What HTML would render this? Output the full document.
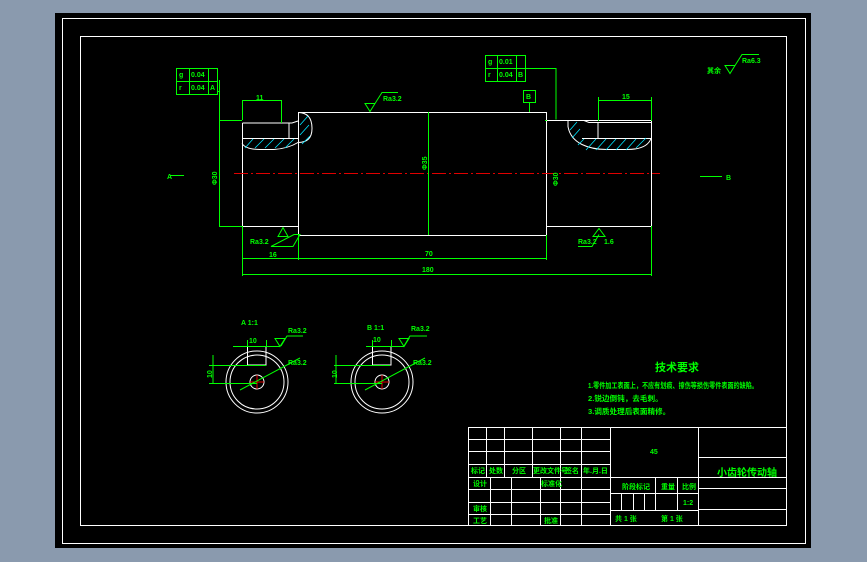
<!DOCTYPE html>
<html><head><meta charset="utf-8"><style>
html,body{margin:0;padding:0;background:#8a9aae;width:867px;height:562px;overflow:hidden}
svg{display:block}
text{font-family:"Liberation Sans","Noto Sans CJK SC",sans-serif;fill:#00ff00;font-weight:bold}
</style></head><body>
<svg width="867" height="562" viewBox="0 0 867 562">
<rect x="55" y="13" width="756" height="535" fill="#000"/>
<rect x="62.5" y="18.5" width="743" height="525" fill="none" stroke="#fff"/>
<rect x="80.5" y="36.5" width="706" height="489" fill="none" stroke="#fff"/>
<g fill="none" stroke-width="1">
<g stroke="#fff">
<path d="M242.5 123V226.5H298.5M298.5 112.5H546.5V235.5H298.5Z"/>
<path d="M546.5 120.5H651.5V226.5H546.5"/>
<path d="M242.5 123H292l6-2M242.5 138.5H298M289 123V138"/>
<path d="M298 112.5q14 0 14 16q0 14-14 14q-10 6-24 7h-14q-14 0-18-6"/>
<path d="M568 120.5v6q2 12 14 18q10 5 25 5h20q20 0 24-11M568 120.5h16l5 2h62M582 138.5h69M598 122v16"/>
</g>
<g stroke="#00e5ff" stroke-width="0.8">
<path d="M245 148l8-9M255 148l9-9M265 148l9-9M275 148l9-9M285 148l9-9M300 135l9-10M300 125l8-9M302 144l8-8"/>
<path d="M586 150l10-11M596 150l10-11M606 150l10-11M616 150l10-11M626 150l10-11M636 148l10-10M570 130l7-8M572 138l8-9M578 145l6-6"/>
</g>
<path d="M234 173.5H660" stroke="#e00000" stroke-dasharray="14 3 2 3"/>
<g stroke="#00ff00">
<path d="M219.5 80V226.5H242M219 120.5H242M428.5 112V235M547 120.5h-2"/>
<path d="M242.5 226V276M298.5 235V260M546.5 235V260M651.5 226V276M242 258.5H546M242 274.5H651"/>
<path d="M242.5 100v20M281.5 100v23M242 100.5h39M598.5 97v24M651.5 97v24M598 100.5h53"/>
<path d="M176.5 68.5h41v26h-41zM176 81.5h41M189.5 68v26M208.5 68v26M217 91.5h3"/>
<path d="M485.5 55.5h40v26h-40zM485 68.5h40M497.5 55v26M516.5 55v26M525 68.5h31v51"/>
<path d="M523.5 90.5h12v12h-12zM529.5 103v9"/>
<path d="M365 103.5h10l-5 8zM375 103.5l7-11h16"/>
<path d="M271 246.5h22l7-12h-6zM278 236.5l5-9l5 9z"/>
<path d="M578 246.5h14l7-12M605 236.5h-12l6-8z"/>
<path d="M725 65.5h10l-5 8zM735 65.5l7-11h17"/>
<path d="M170 175.5h14M700 176.5h22"/>
</g>
<g stroke="#fff">
<circle cx="257" cy="382" r="31"/><circle cx="257" cy="382" r="27"/>
<circle cx="382" cy="382" r="31"/><circle cx="382" cy="382" r="27"/>
<path d="M247.5 347v18h18.5v-18M372.5 347v18h18.5v-18"/>
<circle cx="257" cy="382" r="7"/><circle cx="382" cy="382" r="7"/>
</g>
<path d="M250 382h14M257 375v14M375 382h14M382 375v14" stroke="#e00000"/>
<g stroke="#00ff00">
<path d="M233 346.5h47M280 346.5l5-8h-10zM281 346l6-10h16M213 355v28M209 365.5h57M209 383.5h48M240 390l60-32M247.5 340v7M266.5 340v7"/>
<path d="M366 346.5h38M404 346.5l-5-8h10zM404 346l6-10h17M336 355v28M334 365.5h56M334 383.5h48M365 390l60-32M372.5 340v7M391.5 340v7"/>
</g>
<g stroke="#fff">
<path d="M468.5 427V525M468 427.5H786M610.5 427V525M698.5 427V525"/>
<path d="M468 439.5h142M468 451.5h142M468 464.5h142M468 477.5h318M468 489.5h142M468 502.5h142M468 514.5h142M610 493.5h88M610 510.5h88M698 457.5h88M698 488.5h88M698 509.5h88"/>
<path d="M486.5 427v50M504.5 427v50M532.5 427v50M560.5 427v50M581.5 427v50M490.5 477v48M511.5 477v48M540.5 477v48M560.5 477v48M581.5 477v48M655.5 477v33M677.5 477v33M621.5 493v17M633.5 493v17M644.5 493v17"/>
</g>
</g>
<g font-size="7">
<text x="256" y="100">11</text>
<text x="622" y="99">15</text>
<text x="383" y="101">Ra3.2</text>
<text x="250" y="244">Ra3.2</text>
<text x="578" y="244">Ra3.2</text><text x="604" y="244">1.6</text>
<text x="742" y="63">Ra6.3</text><text x="707" y="73">其余</text>
<text x="269" y="257">16</text><text x="425" y="256">70</text><text x="422" y="272">180</text>
<text x="179" y="77">g</text><text x="191" y="77">0.04</text>
<text x="179" y="90">r</text><text x="191" y="90">0.04</text><text x="210" y="90">A</text>
<text x="488" y="64">g</text><text x="499" y="64">0.01</text>
<text x="488" y="77">r</text><text x="499" y="77">0.04</text><text x="518" y="77">B</text>
<text x="526" y="99">B</text>
<text x="167" y="179">A</text><text x="726" y="180">B</text>
<text x="241" y="325">A 1:1</text><text x="367" y="330">B 1:1</text>
<text x="249" y="343">10</text><text x="373" y="342">10</text>
<text x="288" y="333">Ra3.2</text><text x="411" y="331">Ra3.2</text>
<text x="288" y="365">Ra3.2</text><text x="413" y="365">Ra3.2</text>
<text transform="translate(217,185) rotate(-90)">Φ30</text>
<text transform="translate(427,170) rotate(-90)">Φ35</text>
<text transform="translate(558,186) rotate(-90)">Φ30</text>
<text transform="translate(212,378) rotate(-90)">10</text>
<text transform="translate(337,378) rotate(-90)">10</text>
</g>
<text x="655" y="371" font-size="11">技术要求</text>
<g font-size="7.6">
<text x="588" y="388" textLength="170" lengthAdjust="spacingAndGlyphs">1.零件加工表面上，不应有划痕、擦伤等损伤零件表面的缺陷。</text>
<text x="588" y="401">2.锐边倒钝，去毛刺。</text>
<text x="588" y="414">3.调质处理后表面精修。</text>
</g>
<g font-size="7">
<text x="471" y="473">标记</text><text x="489" y="473">处数</text><text x="512" y="473">分区</text><text x="533" y="473">更改文件号</text><text x="565" y="473">签名</text><text x="583" y="473">年.月.日</text>
<text x="473" y="486">设计</text><text x="541" y="486">标准化</text>
<text x="473" y="511">审核</text><text x="473" y="523">工艺</text><text x="544" y="523">批准</text>
<text x="650" y="454">45</text>
<text x="622" y="489">阶段标记</text><text x="661" y="489">重量</text><text x="682" y="489">比例</text>
<text x="683" y="505">1:2</text>
<text x="615" y="521">共  1  张</text><text x="661" y="521">第  1  张</text>
</g>
<text x="717" y="476" font-size="10">小齿轮传动轴</text>
</svg>
</body></html>
